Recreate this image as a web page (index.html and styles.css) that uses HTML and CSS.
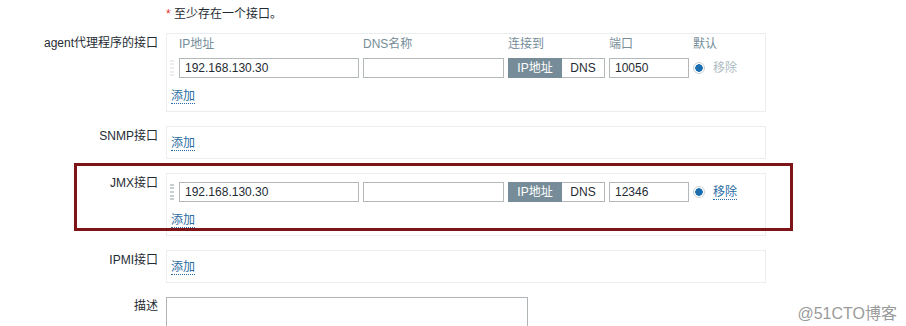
FILE: index.html
```html
<!DOCTYPE html>
<html lang="zh">

<head>
  <meta charset="UTF-8">
  <meta name="viewport" content="width=device-width, initial-scale=1.0">
  <title>主机接口</title>
  <link rel="stylesheet" href="styles.css">
</head>

<body>
  <div class="page">
    <div class="row note-row">
      <div class="label"></div>
      <div class="note"><span class="req">*</span> 至少存在一个接口。</div>
    </div>

    <div class="row">
      <div class="label">agent代理程序的接口</div>
      <div class="iface-box">
        <div class="iface-grid">
          <div></div>
          <div class="th">IP地址</div>
          <div class="th">DNS名称</div>
          <div class="th">连接到</div>
          <div class="th">端口</div>
          <div class="th">默认</div>
          <div></div>
          <div class="drag faint"></div>
          <input class="txt" value="192.168.130.30">
          <input class="txt" value="">
          <div class="toggle"><span class="on">IP地址</span><span>DNS</span></div>
          <input class="txt" value="10050">
          <span class="radio"></span>
          <span class="remove disabled">移除</span>
        </div>
        <div class="add-row"><a class="link">添加</a></div>
      </div>
    </div>

    <div class="row">
      <div class="label">SNMP接口</div>
      <div class="iface-box">
        <div class="add-row"><a class="link">添加</a></div>
      </div>
    </div>

    <div class="row">
      <div class="label">JMX接口</div>
      <div class="iface-box">
        <div class="iface-grid no-head">
          <div class="drag"></div>
          <input class="txt" value="192.168.130.30">
          <input class="txt" value="">
          <div class="toggle"><span class="on">IP地址</span><span>DNS</span></div>
          <input class="txt" value="12346">
          <span class="radio"></span>
          <span class="remove"><a class="link">移除</a></span>
        </div>
        <div class="add-row"><a class="link">添加</a></div>
      </div>
    </div>

    <div class="row">
      <div class="label">IPMI接口</div>
      <div class="iface-box">
        <div class="add-row"><a class="link">添加</a></div>
      </div>
    </div>

    <div class="row">
      <div class="label desc">描述</div>
      <textarea class="area"></textarea>
    </div>

    <!-- annotation frame drawn over the JMX row -->
    <div class="highlight"></div>
    <div class="watermark">@51CTO博客</div>
  </div>
</body>

</html>
```

FILE: styles.css
```css
body {
  margin: 0;
  background-color: #fff;
  font-family: "Liberation Sans", Arial, "Noto Sans CJK SC", sans-serif;
  font-size: 12px;
  color: #1f2c33;
}

.page {
  position: relative;
  height: 326px;
  overflow: hidden;
  padding-top: 5px;
  box-sizing: border-box;
}

.row {
  display: flex;
  gap: 8px;
  margin-bottom: 14px;
}

.note-row {
  margin-bottom: 9px;
}

.label {
  width: 158px;
  flex-shrink: 0;
  text-align: right;
  height: 18px;
  line-height: 18px;
  padding-top: 1px;
  white-space: nowrap;
}

.label.desc {
  padding-top: 0;
}

.note {
  height: 18px;
  line-height: 18px;
}

.req {
  color: #e33734;
}

.iface-box {
  width: 600px;
  box-sizing: border-box;
  border: 1px solid #ebeef0;
  padding: 0 0 5px 4px;
}

.iface-grid {
  display: grid;
  grid-template-columns: 4px 180px 141px 97px 80px 16px auto;
  grid-auto-rows: 20px;
  column-gap: 4px;
  row-gap: 4px;
  align-items: center;
}

.iface-grid.no-head {
  margin-top: 8px;
}

.th {
  line-height: 20px;
  color: #768d99;
  white-space: nowrap;
}

.drag {
  width: 4px;
  height: 16px;
  margin-left: -1px;
  border-left: 2px dotted #c8cdd0;
  border-right: 2px dotted #c8cdd0;
  box-sizing: border-box;
}

.drag.faint {
  border-color: #ebedef;
}

.txt {
  box-sizing: border-box;
  height: 20px;
  width: 100%;
  margin: 0;
  padding: 0 5px;
  border: 1px solid #b3b8bb;
  font-family: "Liberation Sans", Arial, sans-serif;
  font-size: 12px;
  color: #1f2c33;
  background-color: #fff;
}

.toggle {
  display: flex;
  height: 20px;
}

.toggle span {
  box-sizing: border-box;
  height: 20px;
  line-height: 18px;
  text-align: center;
  border: 1px solid #b3b8bb;
  background-color: #fff;
}

.toggle span:first-child {
  width: 54px;
}

.toggle span:last-child {
  width: 43px;
  border-left: none;
}

.toggle .on {
  background-color: #768d99;
  border-color: #768d99;
  color: #fff;
}

.radio {
  width: 12px;
  height: 12px;
  box-sizing: border-box;
  border: 1px solid #c9d1d6;
  border-radius: 50%;
  background: radial-gradient(circle, #1b6fb0 0 3.5px, #fff 4px);
}

.remove {
  line-height: 20px;
  white-space: nowrap;
}

.remove.disabled {
  color: #acbbc2;
}

.add-row {
  margin-top: 8px;
  height: 20px;
  line-height: 20px;
}

.iface-box > .add-row:first-child {
  margin-top: 6px;
}

.link {
  color: #2a6ca3;
  border-bottom: 1px dotted #2a6ca3;
  cursor: pointer;
}

.area {
  width: 362px;
  height: 52px;
  margin: 0;
  box-sizing: border-box;
  border: 1px solid #b0b5b8;
  resize: none;
}

.highlight {
  position: absolute;
  left: 74px;
  top: 163px;
  width: 719px;
  height: 68px;
  box-sizing: border-box;
  border: 3px solid #7c1418;
  pointer-events: none;
}

.watermark {
  position: absolute;
  right: 9px;
  top: 300px;
  font-size: 16px;
  color: #9a9a9a;
}
```
